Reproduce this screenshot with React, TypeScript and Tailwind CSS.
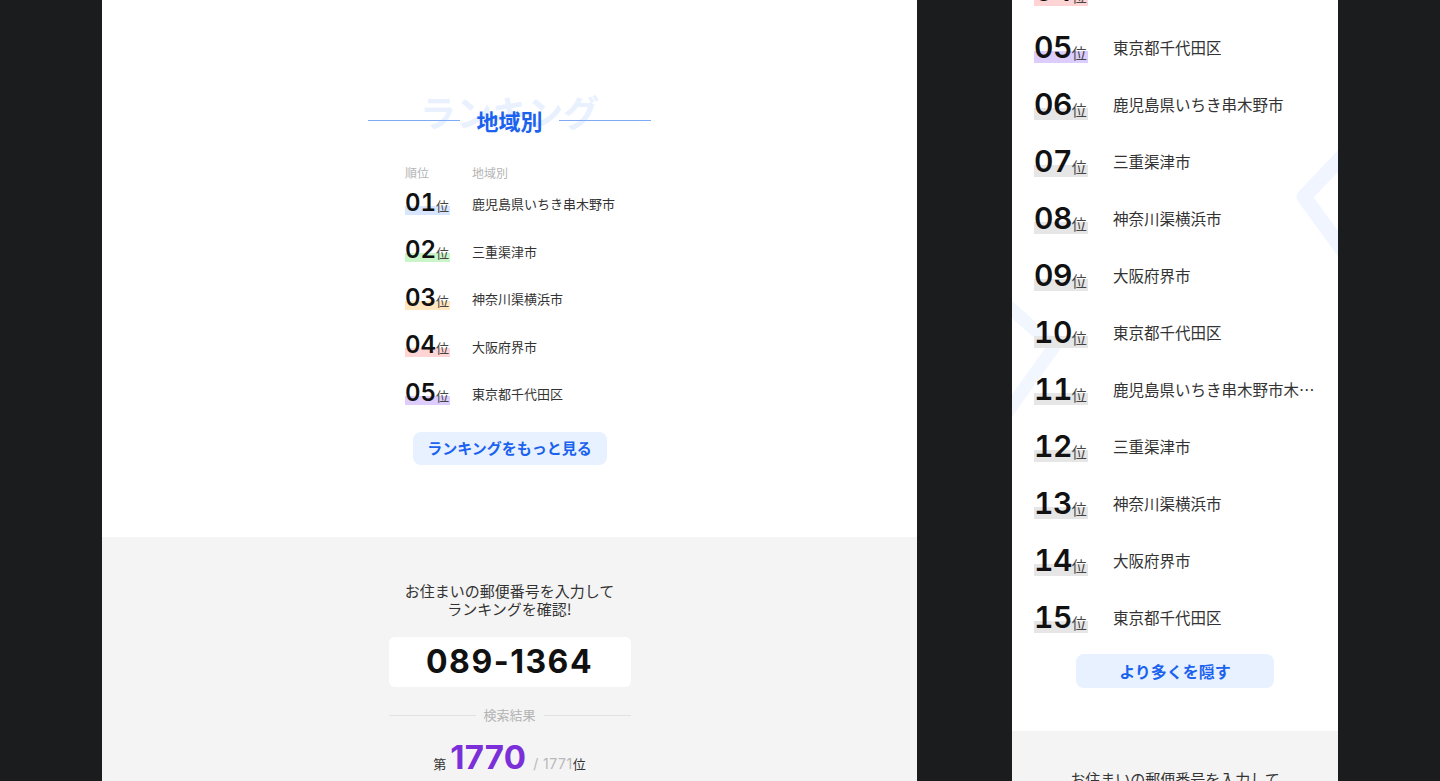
import React from "react";

const JP = "font-['Noto_Sans_CJK_JP','Noto_Sans',sans-serif]";
const NUM = "font-['Inter','Noto_Sans_CJK_JP',sans-serif]";

type Row = { rank: string; place: string; bar: string };

const top5: Row[] = [
  { rank: "01", place: "鹿児島県いちき串木野市", bar: "bg-[linear-gradient(transparent_62%,#d7e5ff_62%)]" },
  { rank: "02", place: "三重渠津市", bar: "bg-[linear-gradient(transparent_62%,#c9f5c9_62%)]" },
  { rank: "03", place: "神奈川渠横浜市", bar: "bg-[linear-gradient(transparent_62%,#ffe6bf_62%)]" },
  { rank: "04", place: "大阪府界市", bar: "bg-[linear-gradient(transparent_62%,#ffd4d4_62%)]" },
  { rank: "05", place: "東京都千代田区", bar: "bg-[linear-gradient(transparent_62%,#dccdfd_62%)]" },
];

const gray = "bg-[linear-gradient(transparent_62%,#e6e6e6_62%)]";

const fullList: Row[] = [
  { rank: "04", place: "大阪府界市", bar: "bg-[linear-gradient(transparent_62%,#ffd4d4_62%)]" },
  { rank: "05", place: "東京都千代田区", bar: "bg-[linear-gradient(transparent_62%,#dccdfd_62%)]" },
  { rank: "06", place: "鹿児島県いちき串木野市", bar: gray },
  { rank: "07", place: "三重渠津市", bar: gray },
  { rank: "08", place: "神奈川渠横浜市", bar: gray },
  { rank: "09", place: "大阪府界市", bar: gray },
  { rank: "10", place: "東京都千代田区", bar: gray },
  { rank: "11", place: "鹿児島県いちき串木野市木野市", bar: gray },
  { rank: "12", place: "三重渠津市", bar: gray },
  { rank: "13", place: "神奈川渠横浜市", bar: gray },
  { rank: "14", place: "大阪府界市", bar: gray },
  { rank: "15", place: "東京都千代田区", bar: gray },
];

function PostalBlock({ compact }: { compact?: boolean }) {
  return (
    <div className={`flex flex-col items-center ${compact ? "pt-[39px]" : "pt-[45px]"}`}>
      <p className={`${JP} text-[15px] leading-[18px] text-[#333] text-center`}>
        お住まいの郵便番号を入力して
        <br />
        ランキングを確認!
      </p>
      <div className="mt-[19px] w-[242px] h-[50px] rounded-md bg-white flex items-center justify-center">
        <span className={`${NUM} text-[32px] font-bold tracking-[1.5px] text-[#111]`}>089-1364</span>
      </div>
      <div className="mt-[20px] w-[242px] flex items-center gap-2">
        <div className="flex-1 h-px bg-[#e2e2e2]" />
        <span className={`${JP} text-[13px] text-[#b3b3b3] leading-4`}>検索結果</span>
        <div className="flex-1 h-px bg-[#e2e2e2]" />
      </div>
      <div className="mt-[14px] flex items-baseline">
        <span className={`${JP} text-[13px] text-[#333] mr-[4px]`}>第</span>
        <span className={`${NUM} text-[33px] font-bold leading-[40px] text-[#7b2fd8] tracking-[0.2px]`}>1770</span>
        <span className={`${NUM} text-[14px] text-[#b8b8b8] ml-[7px] tracking-[0.5px]`}>/&nbsp;1771</span>
        <span className={`${JP} text-[13px] text-[#333]`}>位</span>
      </div>
    </div>
  );
}

export default function App() {
  return (
    <div className="h-[781px] w-[1440px] overflow-hidden bg-[#1b1c1e] flex">
      {/* left panel */}
      <div className="ml-[102px] w-[815px] flex flex-col">
        <div className="h-[537px] bg-white flex flex-col items-center pt-[108px] shrink-0">
          <div className="relative flex items-center gap-4 h-6">
            <span
              className={`${JP} absolute left-1/2 -translate-x-1/2 top-[-15px] whitespace-nowrap text-[36px] font-bold text-[#e9f1ff] leading-none`}
            >
              ランキング
            </span>
            <div className="relative w-[92px] h-px bg-[#7faaf4]" />
            <span className={`${JP} relative text-[22px] font-bold text-[#1b63ee] leading-6`}>地域別</span>
            <div className="relative w-[92px] h-px bg-[#7faaf4]" />
          </div>

          <div className="mt-[33px] w-[210px] ml-[1px]">
            <div className={`${JP} flex h-4 text-[12px] leading-4 text-[#b5b5b5] mb-[-1px]`}>
              <span className="w-[67px]">順位</span>
              <span>地域別</span>
            </div>
            {top5.map((r) => (
              <div key={r.rank} className="h-[47.5px] flex items-center">
                <div className="w-[67px]">
                  <span className={`inline-flex items-end pr-[1px] ${r.bar}`}>
                    <span className={`${NUM} text-[24px] font-semibold leading-[24px] text-[#111] tabular-nums`}>
                      {r.rank}
                    </span>
                    <span className={`${JP} text-[13px] text-[#444] leading-[16px] mb-[1px]`}>位</span>
                  </span>
                </div>
                <span className={`${JP} text-[13px] text-[#333]`}>{r.place}</span>
              </div>
            ))}
          </div>

          <button
            className={`${JP} mt-[14px] w-[194px] h-[33px] rounded-lg bg-[#e8f1ff] text-[15px] font-bold text-[#1b63ee]`}
          >
            ランキングをもっと見る
          </button>
        </div>
        <div className="flex-1 bg-[#f4f4f4]">
          <PostalBlock />
        </div>
      </div>

      {/* right panel */}
      <div className="ml-[95px] w-[326px] flex flex-col shrink-0">
        <div className="relative bg-white overflow-hidden shrink-0">
          <svg
            className="absolute inset-0 w-full h-full pointer-events-none"
            viewBox="0 0 326 731"
            preserveAspectRatio="none"
            fill="none"
          >
            <polyline
              points="332,155 292,197 332,252"
              stroke="#f0f5ff"
              strokeWidth="15"
              strokeLinejoin="round"
            />
            <polyline
              points="-20,292 42,347 -10,420"
              stroke="#f2f6ff"
              strokeWidth="13"
              strokeLinejoin="round"
            />
          </svg>
          <div className="relative mt-[-37.5px]">
            {fullList.map((r) => (
              <div key={r.rank} className="h-[57px] flex items-center pl-[22px] pr-[20px]">
                <div className="w-[79px] shrink-0">
                  <span className={`inline-flex items-end pr-[1px] ${r.bar}`}>
                    <span className={`${NUM} text-[30px] font-semibold leading-[31px] text-[#111] tabular-nums tracking-[-0.5px]`}>
                      {r.rank}
                    </span>
                    <span className={`${JP} text-[15px] text-[#444] leading-[18px] mb-[1px]`}>位</span>
                  </span>
                </div>
                <span className={`${JP} min-w-0 truncate text-[15.5px] text-[#333]`}>{r.place}</span>
              </div>
            ))}
          </div>
          <div className="relative flex justify-center mt-[7px] pb-[43px]">
            <button
              className={`${JP} w-[198px] h-[34px] rounded-lg bg-[#e8f1ff] text-[16px] font-bold text-[#1b63ee]`}
            >
              より多くを隠す
            </button>
          </div>
        </div>
        <div className="flex-1 bg-[#f4f4f4]">
          <PostalBlock compact />
        </div>
      </div>
    </div>
  );
}
